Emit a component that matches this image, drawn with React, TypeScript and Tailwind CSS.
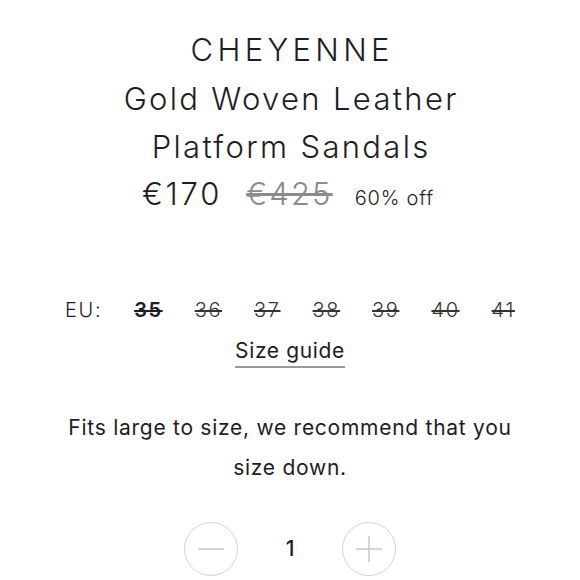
const sizes = ["35", "36", "37", "38", "39", "40", "41"]

const App = () => {
  return (
    <div className="w-[580px] h-[580px] bg-white overflow-hidden flex flex-col items-center text-[#1d1d27] font-['Inter','Liberation_Sans',sans-serif]">
      {/* title */}
      <div className="pt-[26px] text-center text-[31px] leading-[48.5px] font-light">
        <h1 className="tracking-[0.14em] pl-[0.14em]">CHEYENNE</h1>
        <h2 className="tracking-[0.075em] pl-[0.075em]">Gold Woven Leather</h2>
        <h2 className="tracking-[0.075em] pl-[0.075em]">Platform Sandals</h2>
      </div>

      {/* price */}
      <div className="flex items-baseline h-[44px] leading-[44px] font-light pr-[4px]">
        <span className="text-[31px] tracking-[0.09em]">€170</span>
        <span className="text-[31px] tracking-[0.07em] text-[#8b8b8b] line-through ml-[24px]">€425</span>
        <span className="text-[20px] ml-[22px] tracking-[0.04em]">60% off</span>
      </div>

      {/* sizes */}
      <div className="mt-[79px] flex items-center gap-[32px] text-[20px] leading-[30px] tracking-[0.08em]">
        <span className="font-light">EU:</span>
        {sizes.map((s, i) => (
          <span key={s} className={i === 0 ? "font-semibold line-through" : "font-light line-through text-[#333]"}>
            {s}
          </span>
        ))}
      </div>

      <a className="mt-[12px] text-[21px] leading-[28px] pb-[1px] border-b-2 border-[#9a9a9a] tracking-[0.03em]">Size guide</a>

      <p className="mt-[40px] w-[475px] text-center text-[21px] leading-[40px] tracking-[0.035em]">
        Fits large to size, we recommend that you size down.
      </p>

      {/* quantity */}
      <div className="mt-[34px] flex items-center gap-[32px]">
        <button className="w-[54px] h-[54px] rounded-full border-[1.5px] border-[#d4d4d4] flex items-center justify-center">
          <svg width="26" height="26" viewBox="0 0 26 26">
            <line x1="0" y1="13" x2="26" y2="13" stroke="#c8c8c8" strokeWidth="1.5" />
          </svg>
        </button>
        <span className="w-[40px] text-center text-[21px] font-medium">1</span>
        <button className="w-[54px] h-[54px] rounded-full border-[1.5px] border-[#d4d4d4] flex items-center justify-center">
          <svg width="26" height="26" viewBox="0 0 26 26">
            <line x1="0" y1="13" x2="26" y2="13" stroke="#c8c8c8" strokeWidth="1.5" />
            <line x1="13" y1="0" x2="13" y2="26" stroke="#c8c8c8" strokeWidth="1.5" />
          </svg>
        </button>
      </div>
    </div>
  )
}

export default App
